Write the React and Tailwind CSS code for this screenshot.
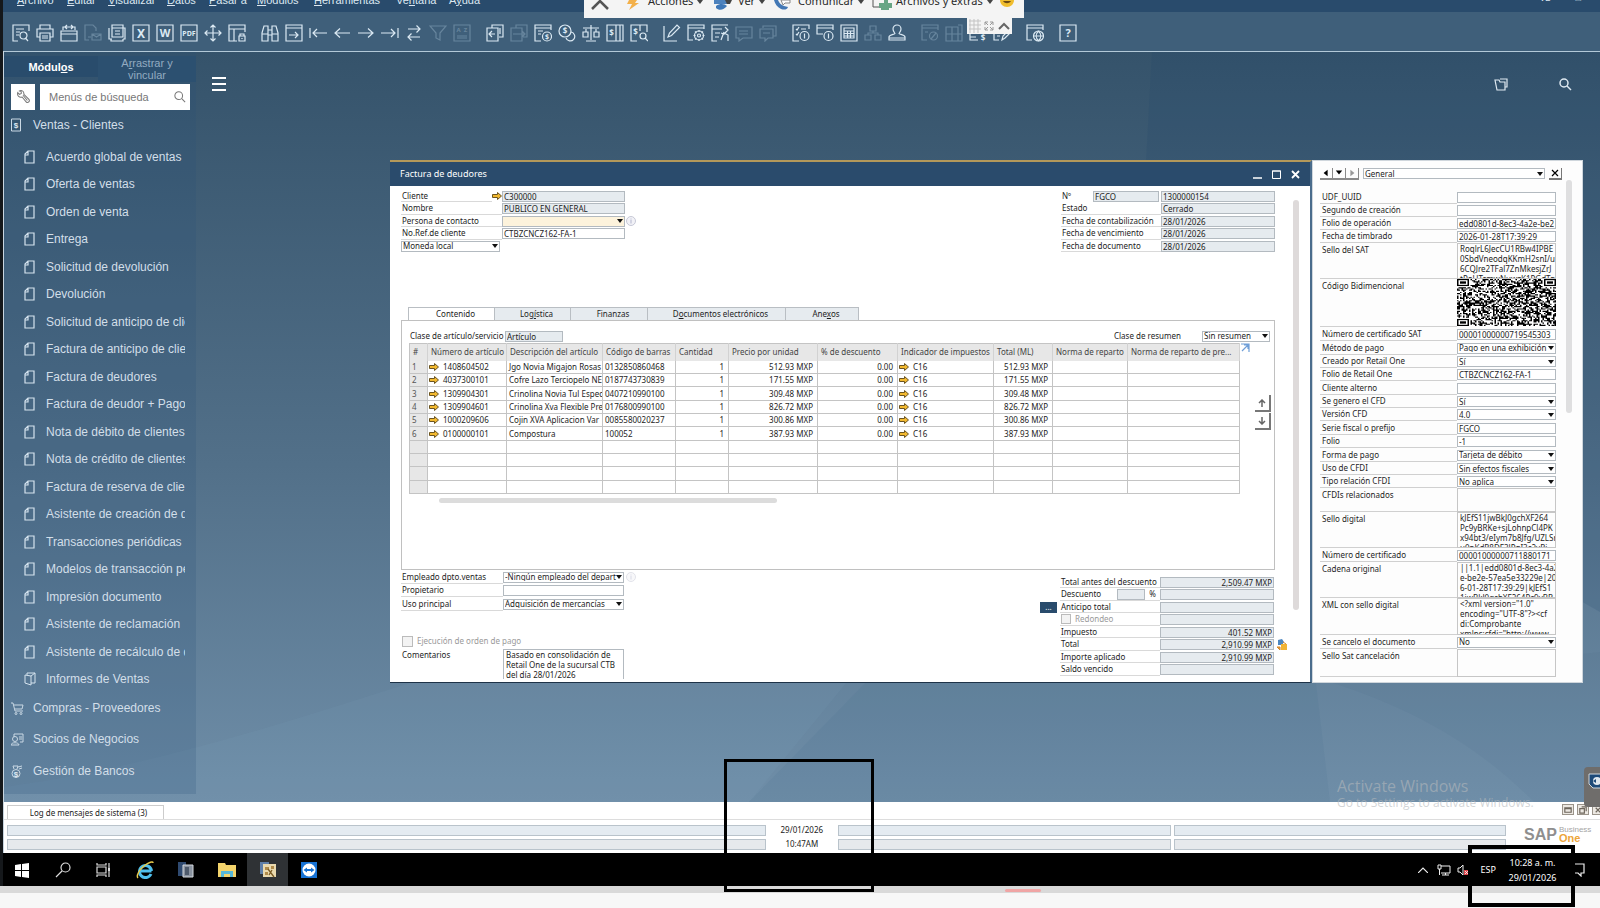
// src/App.jsx
import React, { useId } from 'react';

const MENUS = [
  ['Archivo', 0, 'w-[50px]'],
  ['Editar', 0, 'w-[41px]'],
  ['Visualizar', 0, 'w-[59px]'],
  ['Datos', 0, 'w-[42px]'],
  ['Pasar a', 0, 'w-[48px]'],
  ['Módulos', 0, 'w-[57px]'],
  ['Herramientas', 0, 'w-[82px]'],
  ['Ventana', 2, 'w-[53px]'],
  ['Ayuda', 1, 'w-[40px]'],
];

const SALES_ITEMS = [
  'Acuerdo global de ventas',
  'Oferta de ventas',
  'Orden de venta',
  'Entrega',
  'Solicitud de devolución',
  'Devolución',
  'Solicitud de anticipo de clientes',
  'Factura de anticipo de clientes',
  'Factura de deudores',
  'Factura de deudor + Pago',
  'Nota de débito de clientes',
  'Nota de crédito de clientes',
  'Factura de reserva de clientes',
  'Asistente de creación de documentos',
  'Transacciones periódicas',
  'Modelos de transacción periódica',
  'Impresión documento',
  'Asistente de reclamación',
  'Asistente de recálculo de datos',
];

const COLUMNS = [
  ['#', 'w-[18px]'],
  ['Número de artículo', 'w-[79px]'],
  ['Descripción del artículo', 'w-[96px]'],
  ['Código de barras', 'w-[73px]'],
  ['Cantidad', 'w-[53px]'],
  ['Precio por unidad', 'w-[89px]'],
  ['% de descuento', 'w-[80px]'],
  ['Indicador de impuestos', 'w-[96px]'],
  ['Total (ML)', 'w-[59px]'],
  ['Norma de reparto', 'w-[75px]'],
  ['Norma de reparto de pre...', 'w-[112px]'],
];

const LINES = [
  ['1408604502', 'Jgo Novia Migajon Rosas', '0132850860468', '512.93 MXP'],
  ['4037300101', 'Cofre Lazo Terciopelo NE', '0187743730839', '171.55 MXP'],
  ['1309904301', 'Crinolina Novia Tul Espec', '0407210990100', '309.48 MXP'],
  ['1309904601', 'Crinolina Xva Flexible Pre', '0176800990100', '826.72 MXP'],
  ['1000209606', 'Cojin XVA Aplicacion Var', '0085580020237', '300.86 MXP'],
  ['0100000101', 'Compostura', '100052', '387.93 MXP'],
];

const UDF_ROWS = [
  ['UDF_UUID', 'text', '', 'h-[14px]'],
  ['Segundo de creación', 'text', '', 'h-[13px]'],
  ['Folio de operación', 'text', 'edd0801d-8ec3-4a2e-be2e-57ea5e33229e', 'h-[13px]'],
  ['Fecha de timbrado', 'text', '2026-01-28T17:39:29', 'h-[13px]'],
  ['Sello del SAT', 'area', 'RoqlrL6JecCU1RBw4IPBE\n0SbdVneodqKKmH2snI/u\n6CQJre2TFal7ZnMkesjZrJ\ntPoUTcmwNuwzK1PGdTq', 'h-9'],
  ['Código Bidimencional', 'qr', '', 'h-12'],
  ['Número de certificado SAT', 'text', '00001000000719545303', 'h-[14px]'],
  ['Método de pago', 'select', 'Pago en una exhibición', 'h-[14px]'],
  ['Creado por Retail One', 'select', 'Sí', 'h-[13px]'],
  ['Folio de Retail One', 'text', 'CTBZCNCZ162-FA-1', 'h-[13px]'],
  ['Cliente alterno', 'text', '', 'h-[14px]'],
  ['Se genero el CFD', 'select', 'Sí', 'h-[13px]'],
  ['Versión CFD', 'select', '4.0', 'h-[13px]'],
  ['Serie fiscal o prefijo', 'text', 'FGCO', 'h-[14px]'],
  ['Folio', 'text', '-1', 'h-[13px]'],
  ['Forma de pago', 'select', 'Tarjeta de débito', 'h-[14px]'],
  ['Uso de CFDI', 'select', 'Sin efectos fiscales', 'h-[13px]'],
  ['Tipo relación CFDI', 'select', 'No aplica', 'h-[13px]'],
  ['CFDIs relacionados', 'area', '', 'h-6'],
  ['Sello digital', 'area', 'kJEfS11jwBkJ0gchXF264\nPc9yBRKe+sjLohnpCl4PK\nx94bt3/eIym7b8Jfg/UZLSr\nu0nKdR8DF3JPqI3c2vRi', 'h-9'],
  ['Número de certificado', 'text', '00001000000711880171', 'h-[14px]'],
  ['Cadena original', 'area', '||1.1|edd0801d-8ec3-4a2\ne-be2e-57ea5e33229e|202\n6-01-28T17:39:29|kJEfS1\n1jwBkJ0gchXF264Pc9yBR', 'h-9'],
  ['XML con sello digital', 'area', '<?xml version="1.0"\nencoding="UTF-8"?><cf\ndi:Comprobante\nxmlns:cfdi="http://www', 'h-[37px]'],
  ['Se cancelo el documento', 'select', 'No', 'h-[14px]'],
  ['Sello Sat cancelación', 'area', '', 'h-7'],
];

const Mnemonic = ({ text, at }) => (
  <>
    {text.slice(0, at)}
    <u className="underline-offset-1">{text[at]}</u>
    {text.slice(at + 1)}
  </>
);

/* ---------- toolbar icons (18 x 18) ---------- */

const Glyph = ({ x, y, size, children }) => (
  <text x={x} y={y} fontSize={size} fontWeight="700" textAnchor="middle" fill="currentColor" stroke="none">{children}</text>
);

const Frame = () => <path d="M1 1h16v16H1z" />;

const ICONS = {
  preview: <path d="M6 17H1V1h16v6M4 5h8M4 8h4M4 11h3M16 17l-2.500-3M15 11.500a3.500 3.500 0 1 1-7 0 3.500 3.500 0 0 1 7 0z" />,
  print: <path d="M4 5V1h10v4M4 13H1V5h16v8h-3M4 9h10v8H4zM6 12h6M6 14h6" />,
  printWin: <path d="M1 7h16v10H1zM1 10h16M3 6V3h12v3M5 3l2-2M5 3l2 2M13 3l-2-2M13 3l-2 2" />,
  mail: <path d="M5 16H1V1h8l3 3v3M8 10h9v6H8zM8 10l4.500 3L17 10M4 13h3" />,
  stack: <path d="M4 4V1h11v3M4 15H1V4M15 4h2v11h-2M4 4h11v9H4zM7 7h5M7 10h5M3 15v2h12v-2" />,
  excel: <><Frame /><Glyph x="9" y="13.500" size="12">X</Glyph></>,
  word: <><Frame /><Glyph x="9" y="13" size="11">W</Glyph></>,
  pdf: <><Frame /><Glyph x="9" y="11.500" size="7">PDF</Glyph></>,
  move: <path d="M9 1v16M1 9h16M6.500 3.500L9 1l2.500 2.500M6.500 14.500L9 17l2.500-2.500M3.500 6.500L1 9l2.500 2.500M14.500 6.500L17 9l-2.500 2.500" />,
  lock: <path d="M9 17H1V1h16v7M1 5h16M6 5v12M11 12h6v5h-6zM12 12v-2h4v2M14 14v1" />,
  find: <path d="M1 9l2-7h4v15H1zM17 9l-2-7h-4v15h6zM7 6h4M7 11h4M1 10h6M11 10h6" />,
  enter: <path d="M1 1h16v16H1zM1 4h16M4 11h9M10 8l3 3-3 3" />,
  first: <path d="M1 4v10M4 9h14M8 5L4 9l4 4" />,
  prev: <path d="M2 9h15M7 4.500L2 9l5 4.500" />,
  next: <path d="M1 9h15M11 4.500L16 9l-5 4.500" />,
  last: <path d="M17 4v10M0 9h14M10 5l4 4-4 4" />,
  swap: <path d="M3 5h12M11.500 1.500L15 5l-3.500 3.500M15 13H3M6.500 9.500L3 13l3.500 3.500" />,
  filter: <path d="M1 2h16l-6 7v7l-4-2V9z" />,
  sort: <><Frame /><Glyph x="5.500" y="8" size="6">A</Glyph><Glyph x="12.500" y="8" size="6">Z</Glyph><path d="M4 12h10M4 14h10" /></>,
  copyFrom: <path d="M6 4V1h11v12h-4M1 4h11v13H1zM9 10H3M6 7l-3 3 3 3M14 4v6" />,
  copyTo: <path d="M6 4V1h11v12h-4M1 4h11v13H1zM3 10h12M12 7l3 3-3 3" />,
  payment: <><path d="M7 17H1V1h16v5M1 4h16M4 7h5M4 10h3" /><circle cx="13" cy="12.500" r="4.500" /><Glyph x="13" y="15" size="7">$</Glyph></>,
  coins: <><circle cx="7" cy="7" r="6" /><path d="M13 8a4.500 4.500 0 1 1-5 6" /><Glyph x="7" y="10" size="8">$</Glyph></>,
  scale: <path d="M9 1v15M4 17h10M1 4h16M4 5v3M14 5v3M1 8h5v5H1zM12 8h5v5h-5z" />,
  ledger: <><path d="M1 1h16v16H1zM10 1v16M14 1v16" /><Glyph x="5.500" y="12" size="8">$</Glyph></>,
  ledgerFind: <><path d="M7 17H1V1h16v7M10 1v6" /><circle cx="13" cy="12" r="3" /><path d="M15 14l3 3" /><Glyph x="5.500" y="11" size="8">$</Glyph></>,
  pencil: <path d="M1 2v15h13M5 13l1.500-4L14 1l2.500 2.500-8 8zM5 13l3.500-1.500" />,
  gear: <><path d="M6 16H1V1h16v4M1 4h16" /><circle cx="12" cy="11.500" r="4.500" /><circle cx="12" cy="11.500" r="1.500" /><path d="M12 6v2M12 15v2M6.500 11.500h2M15.500 11.500h2M8 7.500l1.500 1.500M16 7.500L14.500 9M8 15.500L9.500 14M16 15.500L14.500 14" /></>,
  form: <path d="M6 17H1V1h16M1 5h10M4 9h5M4 13h4M10 16l3-8M14 3l3 3-4 4-3-1M13 9l4 2v6" />,
  chat: <path d="M1 3h16v11H8l-4 3v-3H1zM4 7h9M4 10h9" />,
  chats: <path d="M4 4V2h13v10h-3M1 5h13v9H9l-3 3v-3H1zM4 9h7" />,
  checks: <><path d="M7 17H1V1h16v4M4 5l1 1 2-3M4 10l1 1 2-3M9 5h5" /><circle cx="12.500" cy="12" r="4.500" /><path d="M12.500 9.500v5" /></>,
  alarm: <><path d="M7 10H1V1h16v5M1 4h16" /><circle cx="12.500" cy="12" r="4.500" /><path d="M12.500 9.500v5" /></>,
  calc: <path d="M1 1h16v16H1zM4 4h10v10H4zM4 7h10M4 9.500h10M4 12h10M7.500 7v7M10.500 7v7" />,
  org: <path d="M6 2h6v5H6zM1 11h6v5H1zM11 11h6v5h-6zM9 7v2M4 11V9h10v2" />,
  person: <path d="M9 1a4 4 0 0 1 4 4c0 2-1 3-2 4.500 0 1 6 1 6 3.500v3H1v-3c0-2.500 6-2.500 6-3.500C6 8 5 7 5 5a4 4 0 0 1 4-4zM1 14h16" />,
  block: <><path d="M6 16H1V1h16v5M1 4h16M4 8h3" /><circle cx="12.500" cy="12" r="4" /><path d="M10 15l5-6" /></>,
  grid: <path d="M1 3h12v14H1zM7 3v14M1 10h16V1h-4M17 10v7h-4" />,
  cash: <><path d="M9 16H1V1h16v6M1 13h6" /><Glyph x="14" y="17" size="8">$</Glyph></>,
  edit: <path d="M6 16H1V1h16v5M4 12h3M9 16l1-4 5-5 2 2-5 5z" />,
  globe: <><path d="M6 16H1V1h16v5M1 4h16" /><circle cx="12.500" cy="12" r="5" /><path d="M7.500 12h10M12.500 7c-3 3-3 7 0 10M12.500 7c3 3 3 7 0 10" /></>,
  help: <><Frame /><Glyph x="9" y="13" size="11">?</Glyph></>,
};

const TOOLBAR = [
  ['preview', 'print', 'printWin', '-mail', 'stack', 'excel', 'word', 'pdf', 'move', 'lock'],
  ['find', 'enter', 'first', 'prev', 'next', 'last', 'swap', '-filter', '-sort'],
  ['copyFrom', '-copyTo', 'payment', 'coins', 'scale', 'ledger', 'ledgerFind'],
  ['pencil', 'gear', 'form', '-chat', '-chats'],
  ['checks', 'alarm', 'calc', '-org', 'person'],
  ['-block', '-grid', 'cash', 'edit'],
  ['globe'],
  ['help'],
];

const ToolButton = ({ name }) => {
  const off = name.startsWith('-');
  const key = off ? name.slice(1) : name;
  return (
    <button aria-label={key} disabled={off} className={off ? 'w-6 flex justify-center text-[#67859d]' : 'w-6 flex justify-center text-[#dbe9f3]'}>
      <svg viewBox="0 0 18 18" className="w-[18px] h-[18px]" fill="none" stroke="currentColor" strokeWidth="1.2">{ICONS[key]}</svg>
    </button>
  );
};

/* ---------- form pieces ---------- */

const Caret = () => (
  <svg viewBox="0 0 6 4" className="absolute right-0.5 top-1/2 -translate-y-1/2 w-1.5 h-1 pointer-events-none"><path d="M0 0h6L3 4z" fill="#111" /></svg>
);

const Field = ({ id, value = '', className = 'bg-[#e6ebef]', ...rest }) => (
  <input id={id} type="text" readOnly defaultValue={value} className={`block w-full h-[11px] min-w-0 border border-[#b3bac0] px-px leading-none outline-none ${className}`} {...rest} />
);

const Dropdown = ({ id, value, className = 'bg-white', ...rest }) => (
  <span className="relative block w-full">
    <select id={id} className={`block w-full h-[11px] appearance-none border border-[#b3bac0] px-px leading-none outline-none ${className}`} {...rest}>
      <option>{value}</option>
    </select>
    <Caret />
  </span>
);

const LinkArrow = () => (
  <svg viewBox="0 0 10 8" className="w-2.5 h-2 shrink-0"><path d="M.5 2.500h5v-2l4 3.500-4 3.500v-2h-5z" fill="#f3b92f" stroke="#6b5420" strokeWidth="1" /></svg>
);

const InfoDot = () => (
  <svg viewBox="0 0 10 10" className="w-2.5 h-2.5 shrink-0"><circle cx="5" cy="5" r="4.500" fill="#f2f2f7" stroke="#c6c8d6" /><path d="M5 4v3.500M5 2.500v1" stroke="#b3b6ce" /></svg>
);

const lineLabel = 'grow self-stretch flex items-center border-b border-[#d9d9d9] pl-px whitespace-nowrap';

const CustomerBlock = () => {
  const id = useId();
  return (
    <div className="w-[235px]">
      <div className="flex items-center h-3">
        <div className="w-[101px] flex items-center self-stretch">
          <label htmlFor={id + 'a'} className={lineLabel}>Cliente</label>
          <LinkArrow />
        </div>
        <div className="w-[123px]"><Field id={id + 'a'} value="C300000" /></div>
      </div>
      <div className="flex items-center h-[13px]">
        <div className="w-[101px] flex self-stretch"><label htmlFor={id + 'b'} className={lineLabel}>Nombre</label></div>
        <div className="w-[123px]"><Field id={id + 'b'} value="PUBLICO EN GENERAL" /></div>
      </div>
      <div className="flex items-center h-3">
        <div className="w-[101px] flex self-stretch"><label htmlFor={id + 'c'} className={lineLabel}>Persona de contacto</label></div>
        <div className="w-[123px] mr-px"><Dropdown id={id + 'c'} value="" className="bg-[#fdf3dc]" /></div>
        <InfoDot />
      </div>
      <div className="flex items-center h-[13px]">
        <div className="w-[101px] flex self-stretch"><label htmlFor={id + 'd'} className={lineLabel}>No.Ref.de cliente</label></div>
        <div className="w-[123px]"><Field id={id + 'd'} value="CTBZCNCZ162-FA-1" className="bg-white" /></div>
      </div>
      <div className="flex items-center h-3 w-[99px]">
        <Dropdown aria-label="Moneda" value="Moneda local" />
      </div>
    </div>
  );
};

const DocumentBlock = () => {
  const id = useId();
  const rows = [
    ['Estado', 'Cerrado'],
    ['Fecha de contabilización', '28/01/2026'],
    ['Fecha de vencimiento', '28/01/2026'],
    ['Fecha de documento', '28/01/2026'],
  ];
  return (
    <div className="w-[214px]">
      <div className="flex items-center h-3">
        <label htmlFor={id + 'n'} className="w-8 pl-px">Nº</label>
        <div className="w-[66px] mr-0.5"><Field aria-label="Serie" value="FGCO" /></div>
        <div className="w-[114px]"><Field id={id + 'n'} value="1300000154" /></div>
      </div>
      {rows.map(([label, value], i) => (
        <div key={label} className={i % 2 ? 'flex items-center h-3' : 'flex items-center h-[13px]'}>
          <div className="w-[100px] flex self-stretch"><label htmlFor={id + i} className={lineLabel}>{label}</label></div>
          <div className="w-[114px]"><Field id={id + i} value={value} /></div>
        </div>
      ))}
    </div>
  );
};

const TABS = [
  ['Contenido', -1, 'w-[87px]'],
  ['Logística', 3, 'w-[76px]'],
  ['Finanzas', -1, 'w-[77px]'],
  ['Documentos electrónicos', 1, 'w-[138px]'],
  ['Anexos', 3, 'w-[73px]'],
];

const cell = 'border-r border-b border-[#c4c4c4] p-0 overflow-hidden whitespace-nowrap';

const ItemsTable = () => (
  <table className="table-fixed w-[830px] border-collapse border border-[#c4c4c4]">
    <thead>
      <tr className="h-[17px] bg-[#e7e7e7] text-[#444]">
        {COLUMNS.map(([name, width]) => (
          <th key={name} className={`${width} border-r border-[#d2d2d2] p-0 px-[3px] text-left font-normal whitespace-nowrap overflow-hidden`}>{name}</th>
        ))}
      </tr>
    </thead>
    <tbody>
      {Array.from({ length: 10 }, (_, i) => {
        const line = LINES[i];
        return (
          <tr key={i} className="h-[13px] nth-[3n]:h-[14px]">
            <td className={`${cell} pl-0.5 bg-[#e7e7e7] text-[#555]`}>{line ? i + 1 : ''}</td>
            <td className={`${cell} pl-px`}>{line && <span className="flex items-center gap-1"><LinkArrow />{line[0]}</span>}</td>
            <td className={`${cell} pl-0.5`}>{line?.[1]}</td>
            <td className={`${cell} pl-0.5`}>{line?.[2]}</td>
            <td className={`${cell} pr-1 text-right`}>{line && '1'}</td>
            <td className={`${cell} pr-1 text-right`}>{line?.[3]}</td>
            <td className={`${cell} pr-1 text-right`}>{line && '0.00'}</td>
            <td className={`${cell} pl-px`}>{line && <span className="flex items-center gap-1"><LinkArrow />C16</span>}</td>
            <td className={`${cell} pr-1 text-right`}>{line?.[3]}</td>
            <td className={cell}></td>
            <td className={cell}></td>
          </tr>
        );
      })}
    </tbody>
  </table>
);

const ContentPanel = () => {
  const id = useId();
  return (
    <section className="mt-[55px]">
      <div role="tablist" className="flex h-[13px] pl-[7px]">
        {TABS.map(([name, at, width], i) => (
          <button key={name} role="tab" aria-selected={i === 0} className={`${width} pl-2 whitespace-nowrap border-t border-r border-[#b9bec3] ${i === 0 ? 'bg-white border-l' : 'bg-[#e6ebef]'}`}>
            {at < 0 ? name : <Mnemonic text={name} at={at} />}
          </button>
        ))}
      </div>
      <div className="border border-[#c0c0c0] h-[250px] pl-[7px] pt-[9px]">
        <div className="flex items-center h-3">
          <label htmlFor={id + 'k'} className="w-24 pl-px whitespace-nowrap">Clase de artículo/servicio</label>
          <div className="w-[58px]"><Field id={id + 'k'} value="Artículo" /></div>
          <label htmlFor={id + 'r'} className="ml-auto w-[88px]">Clase de resumen</label>
          <div className="w-[68px] mr-1"><Dropdown id={id + 'r'} value="Sin resumen" /></div>
        </div>
        <div className="mt-px flex">
          <ItemsTable />
          <div className="flex flex-col">
            <button aria-label="Ampliar tabla">
              <svg viewBox="0 0 10 10" className="w-2.5 h-2.5" fill="none" stroke="#6f9fd8" strokeWidth="1.2"><path d="M1 1h8v8M2 8l6-6M4 2h4v4" /></svg>
            </button>
            <div className="ml-[15px] mt-[42px] flex flex-col gap-px">
              <button aria-label="Subir línea" className="w-4 h-[17px] border-r-2 border-b-2 border-[#777] flex items-center justify-center">
                <svg viewBox="0 0 8 8" className="w-2 h-2" fill="none" stroke="#666" strokeWidth="1.5"><path d="M4 8V1M1 4l3-3 3 3" /></svg>
              </button>
              <button aria-label="Bajar línea" className="w-4 h-[17px] border-r-2 border-b-2 border-[#777] flex items-center justify-center">
                <svg viewBox="0 0 8 8" className="w-2 h-2" fill="none" stroke="#666" strokeWidth="1.5"><path d="M4 0v7M1 4l3 3 3-3" /></svg>
              </button>
            </div>
          </div>
        </div>
        <div className="mt-1 ml-[30px] w-[338px] h-[5px] rounded-full bg-[#dcdcdc]"></div>
      </div>
    </section>
  );
};

const FooterLeft = () => {
  const id = useId();
  return (
    <div className="w-[240px]">
      <div className="flex items-center h-[14px]">
        <div className="w-[102px] flex self-stretch"><label htmlFor={id + 'e'} className={lineLabel}>Empleado dpto.ventas</label></div>
        <div className="w-[121px] mr-0.5"><Dropdown id={id + 'e'} value="-Ningún empleado del depart" /></div>
        <div className="opacity-50"><InfoDot /></div>
      </div>
      <div className="flex items-center h-[13px]">
        <div className="w-[102px] flex self-stretch"><label htmlFor={id + 'p'} className={lineLabel}>Propietario</label></div>
        <div className="w-[121px]"><Field id={id + 'p'} className="bg-white" /></div>
      </div>
      <div className="flex items-center h-[14px]">
        <div className="w-[102px] flex self-stretch"><label htmlFor={id + 'u'} className={lineLabel}>Uso principal</label></div>
        <div className="w-[121px]"><Dropdown id={id + 'u'} value="Adquisición de mercancías" /></div>
      </div>
      <label className="mt-6 flex items-center gap-1 h-3 pl-px text-[#9a9a9a]">
        <input type="checkbox" disabled className="appearance-none w-[11px] h-[11px] border border-[#bbb] bg-[#f3f3f3]" />
        Ejecución de orden de pago
      </label>
      <div className="flex mt-0.5">
        <label htmlFor={id + 'c'} className="w-[102px] pl-px pt-px">Comentarios</label>
        <textarea id={id + 'c'} readOnly rows={3} className="block w-[121px] h-[30px] resize-none overflow-hidden border border-b-0 border-[#b3bac0] px-0.5 leading-[10px] outline-none" defaultValue={'Basado en consolidación de\nRetail One de la sucursal CTB\ndel día 28/01/2026'} />
      </div>
    </div>
  );
};

const TOTALS = [
  ['Total antes del descuento', '2,509.47 MXP'],
  ['Descuento', ''],
  ['Anticipo total', ''],
  ['Redondeo', ''],
  ['Impuesto', '401.52 MXP'],
  ['Total', '2,910.99 MXP'],
  ['Importe aplicado', '2,910.99 MXP'],
  ['Saldo vencido', ''],
];

const FooterTotals = () => {
  const id = useId();
  return (
    <div className="pt-1.5">
      {TOTALS.map(([label, value], i) => (
        <div key={label} className="flex items-center h-3 even:h-[13px]">
          <div className="w-5">
            {label === 'Anticipo total' && <button className="block w-[17px] h-[11px] bg-[#294b6c] text-white leading-none">...</button>}
          </div>
          <div className="w-[100px] flex self-stretch border-b border-[#d9d9d9] items-center pl-px">
            {label === 'Redondeo' ? (
              <>
                <input id={id + 'chk'} type="checkbox" disabled className="appearance-none w-2.5 h-2.5 mr-1 border border-[#bbb] bg-[#f3f3f3]" />
                <label htmlFor={id + 'chk'} className="text-[#9a9a9a]">{label}</label>
              </>
            ) : (
              <label htmlFor={id + i} className="whitespace-nowrap">{label}</label>
            )}
            {label === 'Descuento' && (
              <span className="ml-auto flex items-center gap-1 pr-1">
                <span className="w-7"><Field aria-label="Porcentaje de descuento" /></span>%
              </span>
            )}
          </div>
          <div className="w-[114px]"><Field id={id + i} value={value} aria-label={label} className="bg-[#e6ebef] text-right" /></div>
          <div className="w-4 pl-0.5">
            {label === 'Total' && (
              <svg viewBox="0 0 12 12" className="w-3 h-3"><path d="M2 1l4-1 2 3-2 3H2z" fill="#4c86c0" /><path d="M5 5h6v6H5z" fill="#f1b435" /><path d="M7 3l3 2M1 8h3v3z" stroke="#d3842a" fill="#e7a33c" /></svg>
            )}
          </div>
        </div>
      ))}
    </div>
  );
};

const InvoiceWindow = () => (
  <div className="absolute left-[386px] top-[108px] w-[922px] h-[523px] overflow-hidden border-t-2 border-r-2 border-b border-t-[#b3985a] border-r-[#4a6c8c] border-b-[#1d3247] bg-white font-['Noto_Sans',sans-serif] text-[8px] leading-[10px] text-[#1d1d1d]">
    <div className="h-6 bg-[#2a4b6c] flex items-center pl-2.5 pr-2.5 text-white">
      <h1 className="text-[9px]">Factura de deudores</h1>
      <div className="ml-auto flex items-center gap-2.5">
        <button aria-label="Minimizar"><svg viewBox="0 0 9 9" className="w-[9px] h-[9px]" stroke="#fff" strokeWidth="1.5"><path d="M0 8h9" /></svg></button>
        <button aria-label="Maximizar"><svg viewBox="0 0 9 9" className="w-[9px] h-[9px]" stroke="#fff" fill="none"><path d="M.5 1h8v7.500h-8zM0 1h9" /></svg></button>
        <button aria-label="Cerrar"><svg viewBox="0 0 9 9" className="w-[9px] h-[9px]" stroke="#fff" strokeWidth="1.8"><path d="M1 1l7 7M8 1L1 8" /></svg></button>
      </div>
    </div>
    <div className="flex">
      <div className="w-[874px] ml-[11px] pt-1">
        <div className="flex justify-between">
          <CustomerBlock />
          <DocumentBlock />
        </div>
        <ContentPanel />
        <div className="flex justify-between">
          <FooterLeft />
          <div className="-mr-[15px]"><FooterTotals /></div>
        </div>
      </div>
      <div className="ml-[18px] mt-3.5 w-1.5 h-[410px] rounded-full bg-[#dedada]"></div>
    </div>
  </div>
);

// Deterministic module pattern for the fiscal code stamp
const QR_W = 66;
const QR_H = 40;
const qrPath = (() => {
  let seed = 7;
  let d = '';
  for (let y = 0; y < QR_H; y++) {
    for (let x = 0; x < QR_W; x++) {
      seed = (seed * 1103515245 + 12345) % 2147483648;
      const corner = (x < 9 || x > QR_W - 10) && y < 7;
      const cornerLow = x < 9 && y > QR_H - 8;
      if (!corner && !cornerLow && seed / 2147483648 > 0.48) d += `M${x} ${y}h1v1h-1z`;
    }
  }
  return d;
})();

const QrFinder = ({ x, y }) => (
  <g>
    <path d={`M${x} ${y}h8v6h-8z`} fill="#000" />
    <path d={`M${x + 1} ${y + 1}h6v4h-6z`} fill="#fff" />
    <path d={`M${x + 2} ${y + 2}h4v2h-4z`} fill="#000" />
  </g>
);

const QrCode = () => (
  <svg viewBox="0 0 66 40" preserveAspectRatio="none" className="block w-full h-[47px] bg-white" role="img" aria-label="Código bidimensional">
    <path d={qrPath} fill="#000" />
    <QrFinder x={0} y={0} />
    <QrFinder x={58} y={0} />
    <QrFinder x={0} y={34} />
  </svg>
);

const UdfRow = ({ label, kind, value, height }) => {
  const id = useId();
  const tall = kind === 'area' || kind === 'qr';
  return (
    <div className={`flex ${height}`}>
      <label htmlFor={id} className={`w-[137px] shrink-0 border-b border-[#d0d0d0] pl-0.5 whitespace-nowrap ${tall ? 'pt-0.5' : 'flex items-center'}`}>{label}</label>
      <div className={`w-[99px] shrink-0 ${tall ? '' : 'flex items-center'}`}>
        {kind === 'text' && <Field id={id} value={value} className="bg-white" />}
        {kind === 'select' && <Dropdown id={id} value={value} />}
        {kind === 'area' && <textarea id={id} readOnly defaultValue={value} wrap="off" className="block w-full h-full resize-none overflow-hidden border border-[#c6c6c6] pl-0.5 leading-[10px] outline-none" />}
        {kind === 'qr' && <QrCode />}
      </div>
    </div>
  );
};

const UdfPanel = () => (
  <aside className="absolute left-[1308px] top-[108px] w-[271px] h-[523px] overflow-hidden border border-[#cfd6dc] bg-[#fdfdfd] pl-[7px] font-['Noto_Sans',sans-serif] text-[8px] leading-[10px] text-[#1d1d1d]">
    <div className="flex items-center pt-1.5 h-[19px]">
      {['M7 1v8L2 5z', 'M1 2h8L5 7z', 'M3 1v8l5-4z'].map((d, i) => (
        <button key={d} aria-label={['Anterior', 'Lista', 'Siguiente'][i]} className="w-[13px] h-3 border-r border-b-2 border-[#8a8a8a] flex items-center justify-center">
          <svg viewBox="0 0 10 10" className="w-2 h-2"><path d={d} fill={i === 2 ? '#999' : '#000'} /></svg>
        </button>
      ))}
      <div className="ml-1 w-[182px]"><Dropdown aria-label="Categoría" value="General" /></div>
      <button aria-label="Cerrar panel" className="ml-1 w-[13px] h-3 border-r border-b-2 border-[#777] flex items-center justify-center">
        <svg viewBox="0 0 8 8" className="w-2 h-2" stroke="#000" strokeWidth="1.2"><path d="M1 1l6 6M7 1L1 7" /></svg>
      </button>
    </div>
    <div className="flex">
      <div className="w-[236px] pt-2.5">
        {UDF_ROWS.map(([label, kind, value, height]) => (
          <UdfRow key={label} label={label} kind={kind} value={value} height={height} />
        ))}
      </div>
      <div className="ml-2.5 w-1.5 h-[233px] rounded-full bg-[#dfdfe0]"></div>
    </div>
  </aside>
);

/* ---------- shell ---------- */

const DocIcon = () => (
  <svg viewBox="0 0 11 14" className="w-[11px] h-3.5 shrink-0" fill="none" stroke="#d5e3ee" strokeWidth="1.2"><path d="M4 1h6v12H1V4zM4 1v4H1" /></svg>
);

const Sidebar = () => (
  <nav className="w-48 mb-2 shrink-0 bg-[#28507a]/20 text-xs text-[#d3dfe9]">
    <div className="pt-1 h-8 flex items-start text-[11px] leading-[12px] text-center">
      <button className="w-[94px] h-[21px] shrink-0 bg-[#294c6c] font-bold text-white"><Mnemonic text="Módulos" at={5} /></button>
      <button className="grow h-[26px] bg-[#2c5070] px-5 text-[#93abc0]">A<u>r</u>rastrar y vincular</button>
    </div>
    <div className="flex gap-[5px] pl-[7px]">
      <button aria-label="Configurar" className="w-6 h-[26px] bg-white flex items-center justify-center">
        <svg viewBox="0 0 16 16" className="w-3.5 h-3.5" fill="none" stroke="#777" strokeWidth="1.2"><path d="M2 3l2 2 2-1 0-2-2-1c2-1 5 0 5 3l0 1 6 6c1 2-1 4-3 3L7 8C4 9 1 7 2 3zM8 6l5 6" /></svg>
      </button>
      <div className="w-[150px] h-[26px] bg-white flex items-center pl-[9px] pr-1">
        <input type="text" aria-label="Menús de búsqueda" placeholder="Menús de búsqueda" className="min-w-0 grow text-[11px] outline-none placeholder:text-[#777]" />
        <svg viewBox="0 0 14 14" className="w-3 h-3 shrink-0" fill="none" stroke="#777" strokeWidth="1.2"><circle cx="5.500" cy="5.500" r="4.500" /><path d="M9 9l4 4" /></svg>
      </div>
    </div>
    <a href="#ventas" className="flex items-center h-[30px] mb-[3px] pl-[7px] gap-3">
      <svg viewBox="0 0 10 14" className="w-2.5 h-3.5 shrink-0" fill="none" stroke="#c9d8e4"><path d="M.5 1h9v12h-9z" /><text x="5" y="10" fontSize="8" fontWeight="700" textAnchor="middle" fill="#dfe9f1" stroke="none">$</text></svg>
      Ventas - Clientes
    </a>
    <ul className="pl-5 w-[181px]">
      {SALES_ITEMS.map((item) => (
        <li key={item} className="h-7 odd:h-[27px]">
          <a href="#item" className="h-full flex items-center gap-[11px] overflow-hidden whitespace-nowrap"><DocIcon />{item}</a>
        </li>
      ))}
      <li className="h-7">
        <a href="#informes" className="h-full flex items-center gap-2.5">
          <svg viewBox="0 0 12 14" className="w-3 h-3.5 shrink-0" fill="none" stroke="#d5e3ee"><path d="M1 3l6 1v9l-6-2zM3 3V1h8v10H7M7 4l4-3" /></svg>
          Informes de Ventas
        </a>
      </li>
    </ul>
    <a href="#compras" className="flex items-center h-[30px] pl-[7px] gap-[9px]">
      <svg viewBox="0 0 13 13" className="w-[13px] h-[13px]" fill="none" stroke="#c9d8e4"><path d="M0 1h2l2 8h8M3 3h9l-1 4H4" /><circle cx="5" cy="11.500" r="1" /><circle cx="10" cy="11.500" r="1" /></svg>
      Compras - Proveedores
    </a>
    <a href="#socios" className="flex items-center h-8 pl-[7px] gap-[9px]">
      <svg viewBox="0 0 13 13" className="w-[13px] h-[13px]" fill="none" stroke="#c9d8e4"><path d="M3 4V1h9v8H9M0 12c0-3 8-3 8 0zM8 4h3M8 6h3" /><circle cx="4" cy="6" r="2.500" /></svg>
      Socios de Negocios
    </a>
    <a href="#bancos" className="flex items-center h-8 pl-[7px] gap-[9px]">
      <svg viewBox="0 0 13 13" className="w-[13px] h-[13px]" fill="none" stroke="#c9d8e4"><circle cx="5" cy="8.500" r="4" /><path d="M3 4L2 1h5l-1 3M7 2l4-1M8 4l3-1" /><text x="5" y="11.500" fontSize="8" fontWeight="700" textAnchor="middle" fill="#dfe9f1" stroke="none">$</text></svg>
      Gestión de Bancos
    </a>
  </nav>
);

const BarCaret = () => (
  <svg viewBox="0 0 6 4" className="w-1.5 h-1 ml-1"><path d="M0 0h6L3 4z" fill="#444" /></svg>
);

const RemoteToolbar = () => (
  <div className="absolute left-[584px] top-0 w-[440px] h-[18px] bg-[#f4f4f4] text-[11px] leading-[14px] text-[#2b2b2b]">
    <div className="flex items-start h-full overflow-hidden whitespace-nowrap pl-1.5">
      <button aria-label="Cerrar sesión" className="w-9"><svg viewBox="0 0 20 10" className="w-5 h-2.5" fill="none" stroke="#555" strokeWidth="2.500"><path d="M2 9l8-8 8 8" /></svg></button>
      <button className="flex w-[88px]">
        <svg viewBox="0 0 14 10" className="w-3.5 h-2.5 mr-2" fill="#f3b04a"><path d="M3 0h8L9 3h4L3 10l3-6H1z" /></svg>
        <span className="-mt-1.5">Acciones</span><BarCaret />
      </button>
      <button className="flex w-[60px]">
        <svg viewBox="0 0 18 10" className="w-[18px] h-2.5 mr-1.5"><path d="M0 0h14v4H0z" fill="#4d82bd" /><path d="M11 0h7l-2 4h-3z" fill="#444" /><path d="M2 6c4-3 9-2 11 0-3 4-8 5-11 2z" fill="#3f78b8" /></svg>
        <span className="-mt-1.5">Ver</span><BarCaret />
      </button>
      <button className="flex w-[98px]">
        <svg viewBox="0 0 18 10" className="w-[18px] h-2.5 mr-1.5"><path d="M0 0h4c1 3 3 5 6 6l4 1c-1 3-4 3-7 2C3 7 1 4 0 0z" fill="#4378b5" /><path d="M7 0h9v3h-5l-2 2z" fill="#fff" stroke="#888" /></svg>
        <span className="-mt-1.5">Comunicar</span><BarCaret />
      </button>
      <button className="flex w-[128px]">
        <svg viewBox="0 0 20 10" className="w-5 h-2.5 mr-1"><path d="M1 0v7h8" fill="none" stroke="#555" /><path d="M7 3h5V0h4v3h4v5h-3v2H9V8H7z" fill="#67a585" /></svg>
        <span className="-mt-1.5">Archivos y extras</span><BarCaret />
      </button>
      <svg viewBox="0 0 14 8" className="w-3.5 h-2"><path d="M0 0h14c0 4-3 7-7 7S0 4 0 0z" fill="#f0bd2d" /><path d="M3 1c2 3 6 3 8 0z" fill="#6b4a14" /></svg>
    </div>
    <div className="absolute left-[383px] top-[18px] w-[45px] h-4 bg-[#f4f4f4] flex items-center justify-around">
      <svg viewBox="0 0 12 14" className="w-3 h-3.5" stroke="#c3c3c3"><path d="M0 2h12M0 6h12M0 10h12M1 0v14M5 0v14M9 0v14" /></svg>
      <svg viewBox="0 0 10 10" className="w-2.5 h-2.5" fill="none" stroke="#999"><path d="M1 4V1h3M6 1h3v3M9 6v3H6M4 9H1V6M1 1l3 3M9 1L6 4M9 9L6 6M1 9l3-3" /></svg>
      <svg viewBox="0 0 12 8" className="w-3 h-2" fill="none" stroke="#666" strokeWidth="2"><path d="M1 7l5-5 5 5" /></svg>
    </div>
  </div>
);

const Backdrop = () => (
  <svg viewBox="0 0 1596 750" preserveAspectRatio="none" className="absolute inset-0 w-full h-full">
    <path d="M1148 0H1596V560C1400 450 1180 280 1142 110z" fill="#1f4468" opacity=".16" />
    <path d="M0 735C150 715 300 665 440 620L900 560 745 750H0z" fill="#8fb0c8" opacity=".08" />
    <path d="M745 750L960 530H1300L1326 750z" fill="#375f80" opacity=".09" />
    <path d="M1326 630C1420 660 1480 700 1530 750H1596V600z" fill="#2f5878" opacity=".06" />
  </svg>
);

const Desktop = () => (
  <main className="relative grow min-h-[750px] flex overflow-hidden bg-linear-to-b from-[#35536b] from-0% via-[#527089] via-55% to-[#6f8ea8] border-t border-[#b3c9d8]">
    <Backdrop />
    <div className="relative flex grow">
      <Sidebar />
      <header className="grow flex items-start justify-between pl-4 pr-7 pt-[25px]">
        <button aria-label="Menú"><svg viewBox="0 0 14 14" className="w-3.5 h-3.5" stroke="#fff" strokeWidth="2"><path d="M0 1h14M0 7h14M0 13h14" /></svg></button>
        <div className="flex gap-[50px] text-[#dfe9f1]">
          <button aria-label="Abrir"><svg viewBox="0 0 14 14" className="w-3.5 h-3.5" fill="none" stroke="currentColor" strokeWidth="1.2"><path d="M1 3h4l1 2h5v8H3zM6 2h7v8h-2" /></svg></button>
          <button aria-label="Buscar"><svg viewBox="0 0 14 14" className="w-3.5 h-3.5" fill="none" stroke="currentColor" strokeWidth="1.5"><circle cx="6" cy="6" r="4" /><path d="M9 9l4 4" /></svg></button>
        </div>
      </header>
    </div>
    <InvoiceWindow />
    <UdfPanel />
  </main>
);

const StatusBars = () => (
  <div className="flex flex-col gap-[3px]">
    <div className="h-[11px] bg-[#e4ebf1] border border-[#b9c3cb]"></div>
    <div className="h-[11px] bg-[#e6e9ec] border border-[#b9c3cb]"></div>
  </div>
);

const StatusArea = () => (
  <footer className="relative h-[51px] overflow-hidden bg-white text-[8px] leading-[10px] text-[#222]">
    <div className="h-[18px] flex items-end border-b border-[#ddd] pl-[3px]">
      <button className="w-[157px] h-[14px] pl-1.5 border border-b-0 border-[#ccc]">Log de mensajes de sistema (3)</button>
      <div className="ml-auto -mr-1 mb-1 flex gap-[3px] text-[#6d665c]">
        {['M2 3h7v5H2zM2 4h7', 'M4 2h5v5M2 4h5v5H2z', 'M3 3l5 5M8 3L3 8'].map((d) => (
          <button key={d} aria-label="Panel" className="w-3 h-[11px] border border-[#9b948a] bg-[#ece8e2]">
            <svg viewBox="0 0 11 11" className="w-2.5 h-2.5" fill="none" stroke="currentColor" strokeWidth="1.3"><path d={d} /></svg>
          </button>
        ))}
      </div>
    </div>
    <div className="flex pl-[3px] pt-[5px]">
      <div className="grow-[760]"><StatusBars /></div>
      <div className="w-[72px] text-center"><p className="h-[14px]">29/01/2026</p><p className="h-[14px]">10:47AM</p></div>
      <div className="grow-[333]"><StatusBars /></div>
      <div className="w-[3px]"></div>
      <div className="grow-[331]"><StatusBars /></div>
      <div className="w-[94px] pl-[18px] flex items-start gap-0.5 pt-px font-['Liberation_Sans',sans-serif]">
        <span className="text-[16px] leading-[18px] font-bold text-[#8f8f8f]">SAP</span>
        <span className="leading-[8px] text-[#a5a5a5]">Business<b className="block text-[11px] leading-[9px] text-[#eda53a]">One</b></span>
      </div>
    </div>
  </footer>
);

const TaskSlot = ({ label, active, children }) => (
  <button aria-label={label} className={`w-[41px] h-full flex items-center justify-center ${active ? 'bg-[#2f3235]' : ''}`}>
    <svg viewBox="0 0 18 18" className="w-[18px] h-[18px]" fill="none">{children}</svg>
  </button>
);

const Taskbar = () => (
  <div className="h-[33px] bg-black text-white flex items-center justify-between">
    <div className="flex h-full -ml-0.5">
      <TaskSlot label="Inicio"><path d="M2 4l6-1v6H2zM9 3l7-1v7H9zM2 10h6v6l-6-1zM9 10h7v7l-7-1z" fill="#fff" /></TaskSlot>
      <TaskSlot label="Buscar"><path d="M8 10l-6 6M16 6.500a4.500 4.500 0 1 1-9 0 4.500 4.500 0 0 1 9 0z" stroke="#ddd" strokeWidth="1.2" /></TaskSlot>
      <TaskSlot label="Vista de tareas"><path d="M2 6h9v6H2zM2 2v2h9V2M2 16v-2h9v2M14 2v14" stroke="#ddd" strokeWidth="1.2" /><path d="M13 7h2v3h-2z" fill="#ddd" /></TaskSlot>
      <TaskSlot label="Internet Explorer">
        <path d="M15.500 10H5M15 13a6 6 0 1 1 .500-3" stroke="#4fc0ee" strokeWidth="3" />
        <path d="M2 17c-2-2 1-8 6-12s9-5 9-3" stroke="#e8c94a" strokeWidth="1.5" />
      </TaskSlot>
      <TaskSlot label="Servidor"><path d="M1 1h8v14H1z" fill="#2f4a70" /><path d="M6 4h10v12H6z" fill="#8a93a0" stroke="#d5d9de" /><path d="M8 6h4v8H8z" fill="#4e5a6b" /></TaskSlot>
      <TaskSlot label="Explorador"><path d="M0 2h7l1 2h10v12H0z" fill="#f3d36b" /><path d="M3 10h12v6h-3v-3H6v3H3z" fill="#56b7d8" /></TaskSlot>
      <TaskSlot label="SAP Business One" active><path d="M1 1h9v12H1z" fill="#5f7fa8" /><path d="M4 3h13v13H4z" fill="#e9d9ae" /><path d="M6 6h4v3H6zM12 5h3v3h-3zM6 11h3v3H6z" fill="#b08b4a" /><path d="M9 8l6 8M13 9l-3 5" stroke="#7a5c25" strokeWidth="1.3" /></TaskSlot>
      <TaskSlot label="TeamViewer"><path d="M1 1h16v16H1z" fill="#1672d4" /><circle cx="9" cy="9" r="6.500" fill="#fff" /><path d="M3.500 9L7 6.500v1.500h4V6.500L14.500 9 11 11.500V10H7v1.500z" fill="#1672d4" /></TaskSlot>
    </div>
    <div className="flex items-center text-[9px] pr-[15px]">
      <svg viewBox="0 0 10 6" className="w-2.5 h-1.5 mr-[9px]" fill="none" stroke="#eee" strokeWidth="1.2"><path d="M0 6l5-5 5 5" /></svg>
      <svg viewBox="0 0 14 12" className="w-3.5 h-3 mr-1.5" fill="none" stroke="#eee"><path d="M4 2h9v7H4M1 1h3v4H1zM2.500 5v6M5 11h7M8.500 9v2" /></svg>
      <svg viewBox="0 0 12 12" className="w-3 h-3 mr-3" fill="none"><path d="M1 4h2l3-3v10L3 8H1z" stroke="#eee" /><path d="M7 6h5v5H7z" fill="#e0454b" /><path d="M8 7l3 3M11 7l-3 3" stroke="#fff" strokeWidth=".8" /></svg>
      <span className="mr-3">ESP</span>
      <div className="w-[49px] leading-[15px] text-center whitespace-nowrap"><p>10:28 a. m.</p><p>29/01/2026</p></div>
      <svg viewBox="0 0 12 14" className="w-3 h-3.5 ml-4" fill="none" stroke="#eee" strokeWidth="1.2"><path d="M1 1h10v9H8v3l-3-3H1" /></svg>
    </div>
  </div>
);

const App = () => (
  <div className="relative min-h-screen flex flex-col bg-[#f7f7f7] font-['Noto_Sans','Open_Sans',sans-serif] overflow-hidden">
    <div className="grow flex flex-col border-l-[3px] border-[#15181b]">
      <div className="h-3 bg-[#294b6c] overflow-hidden flex justify-between pl-3.5 text-[#dde8f1] text-[11px]">
        <div className="flex -mt-[9px] leading-[15px] font-['Liberation_Sans',sans-serif]">
          {MENUS.map(([name, at, width]) => (
            <button key={name} className={`${width} h-[18px] text-left whitespace-nowrap`}><Mnemonic text={name} at={at} /></button>
          ))}
        </div>
        <div className="flex gap-2.5 pr-1 -mt-[9px] h-3.5 text-[9px] leading-[14px]">
          <button aria-label="VB">VB</button><button aria-label="Minimizar">–</button><button aria-label="Restaurar">□</button><button aria-label="Cerrar">×</button>
        </div>
      </div>
      <div className="h-[39px] pt-0.5 pl-1.5 bg-[#3f5f7a] flex items-center gap-[9px]">
        {TOOLBAR.map((group) => (
          <div key={group[0]} className="flex">
            {group.map((name) => <ToolButton key={name} name={name} />)}
          </div>
        ))}
      </div>
      <div className="grow flex flex-col border-l border-[#c8d5df] font-['Liberation_Sans',sans-serif]">
        <Desktop />
      </div>
      <div className="border-l border-[#c8d5df]"><StatusArea /></div>
      <Taskbar />
    </div>
    <div className="h-[22px] border-t-[7px] border-[#d9d9d9]"></div>

    <RemoteToolbar />
    <div className="absolute left-[1337px] bottom-[97px] text-[#b4b8bc]/60 font-['Open_Sans',sans-serif] whitespace-nowrap pointer-events-none">
      <p className="text-[16px] leading-[18px]">Activate Windows</p>
      <p className="text-[12px] leading-[16px]">Go to Settings to activate Windows.</p>
    </div>
    <div className="absolute right-0 bottom-[101px] w-4 h-10 rounded-l bg-[#6f6d6b] flex items-start pt-1.5 pl-1 overflow-hidden">
      <svg viewBox="0 0 14 16" className="w-3.5 h-4 shrink-0"><path d="M1 1h13v14H5L1 11z" fill="#1e4a78" stroke="#cfd6dc" /><circle cx="9" cy="8" r="4" fill="#dfe7ee" /><path d="M5 8l3-2v4z" fill="#1e4a78" /></svg>
    </div>
    <div className="absolute left-[1005px] bottom-4 w-9 h-[3px] rounded-full bg-[#f0a5a5]"></div>
    <div className="absolute left-[724px] top-[759px] w-[150px] h-[133px] border-[3px] border-black pointer-events-none"></div>
    <div className="absolute left-[1468px] top-[845px] w-[107px] h-[62px] border-4 border-black pointer-events-none"></div>
  </div>
);

export default App;
